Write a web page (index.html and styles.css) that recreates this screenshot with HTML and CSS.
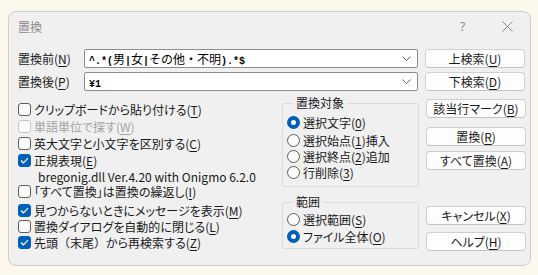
FILE: index.html
```html
<!DOCTYPE html>
<html lang="ja">
<head>
  <meta charset="UTF-8" />
  <title>置換</title>
  <link rel="stylesheet" href="styles.css">
</head>
<body>
  <div class="dialog">
    <div class="titlebar">
      <span class="title">置換</span>
      <span class="help">?</span>
      <span class="close">
        <svg width="11" height="11" viewBox="0 0 11 11"><path d="M0.5 0.5 L10.5 10.5 M10.5 0.5 L0.5 10.5" stroke="#8a8a8a" stroke-width="1" fill="none"/></svg>
      </span>
    </div>

    <div class="content">
      <div class="field-row">
        <label class="field-label">置換前(<u>N</u>)</label>
        <div class="combo">
          <span class="combo-text"><span class="han">^.*(</span>男<span class="han">|</span>女<span class="han">|</span>その他・不明<span class="han">).*$</span></span>
          <svg class="chevron" width="9" height="5" viewBox="0 0 9 5"><path d="M0.5 0.5 L4.5 4.5 L8.5 0.5" stroke="#606060" fill="none"/></svg>
        </div>
        <button class="btn">上検索(<u>U</u>)</button>
      </div>
      <div class="field-row">
        <label class="field-label">置換後(<u>P</u>)</label>
        <div class="combo">
          <span class="combo-text"><span class="han">¥1</span></span>
          <svg class="chevron" width="9" height="5" viewBox="0 0 9 5"><path d="M0.5 0.5 L4.5 4.5 L8.5 0.5" stroke="#606060" fill="none"/></svg>
        </div>
        <button class="btn">下検索(<u>D</u>)</button>
      </div>

      <div class="main">
        <div class="options">
          <div class="check r17"><span class="box"></span>クリップボードから貼り付ける(<u>T</u>)</div>
          <div class="check r17 disabled"><span class="box"></span>単語単位で探す(<u>W</u>)</div>
          <div class="check r17"><span class="box"></span>英大文字と小文字を区別する(<u>C</u>)</div>
          <div class="check r16"><span class="box on"><svg width="9" height="7" viewBox="0 0 9 7"><path d="M1 3.5 L3.4 5.8 L8 1.2" stroke="#fff" stroke-width="1.2" fill="none"/></svg></span>正規表現(<u>E</u>)</div>
          <div class="version r16">bregonig.dll Ver.4.20 with Onigmo 6.2.0</div>
          <div class="check r15"><span class="box"></span>「すべて置換」は置換の繰返し(<u>I</u>)</div>
          <div class="check r16 gap"><span class="box on"><svg width="9" height="7" viewBox="0 0 9 7"><path d="M1 3.5 L3.4 5.8 L8 1.2" stroke="#fff" stroke-width="1.2" fill="none"/></svg></span>見つからないときにメッセージを表示(<u>M</u>)</div>
          <div class="check r16"><span class="box"></span>置換ダイアログを自動的に閉じる(<u>L</u>)</div>
          <div class="check r16"><span class="box on"><svg width="9" height="7" viewBox="0 0 9 7"><path d="M1 3.5 L3.4 5.8 L8 1.2" stroke="#fff" stroke-width="1.2" fill="none"/></svg></span>先頭<span class="wide">（</span>末尾<span class="wide">）</span>から再検索する(<u>Z</u>)</div>
        </div>

        <div class="groups">
          <fieldset class="group target">
            <legend>置換対象</legend>
            <div class="radio first"><span class="dot on"></span>選択文字(<u>0</u>)</div>
            <div class="radio"><span class="dot"></span>選択始点(<u>1</u>)挿入</div>
            <div class="radio"><span class="dot"></span>選択終点(<u>2</u>)追加</div>
            <div class="radio"><span class="dot"></span>行削除(<u>3</u>)</div>
          </fieldset>
          <fieldset class="group scope">
            <legend>範囲</legend>
            <div class="radio first"><span class="dot"></span>選択範囲(<u>S</u>)</div>
            <div class="radio"><span class="dot on"></span>ファイル全体(<u>O</u>)</div>
          </fieldset>
        </div>

        <div class="actions">
          <button class="btn">該当行マーク(<u>B</u>)</button>
          <button class="btn mt9">置換(<u>R</u>)</button>
          <button class="btn mt5">すべて置換(<u>A</u>)</button>
          <button class="btn mt36">キャンセル(<u>X</u>)</button>
          <button class="btn mt7">ヘルプ(<u>H</u>)</button>
        </div>
      </div>
    </div>
  </div>
</body>
</html>
```

FILE: styles.css
```css
* {
  box-sizing: border-box;
}

body {
  margin: 0;
  padding: 11px 0 0 8px;
  background: #fcf8ec;
  font-family: "Noto Sans CJK JP", sans-serif;
  font-size: 12px;
  color: #1a1a1a;
  font-feature-settings: "palt" 1;
}

u {
  text-underline-offset: 2px;
}

.wide {
  font-feature-settings: normal;
}

.dialog {
  width: 523px;
  height: 255px;
  border: 1px solid #cdcdcd;
  border-radius: 8px;
  background: #f0f0f0;
}

/* judul */
.titlebar {
  display: flex;
  align-items: center;
  height: 28px;
}

.title {
  flex: 1;
  padding-left: 9px;
  color: #8c8c8c;
}

.help,
.close {
  width: 45px;
  display: flex;
  justify-content: center;
  align-items: center;
  color: #8c8c8c;
  font-family: "Noto Sans", sans-serif;
}

.content {
  padding: 9px 0 0 9px;
}

.field-row {
  display: flex;
  align-items: center;
  height: 19px;
  margin-bottom: 4px;
}

.field-label {
  width: 66px;
}

.combo {
  width: 334px;
  height: 19px;
  display: flex;
  align-items: center;
  padding: 0 6px 0 4px;
  background: #fff;
  border: 1px solid #8d8d8d;
  border-radius: 2px;
}

.combo-text {
  flex: 1;
  font-feature-settings: normal;
  font-size: 12px;
  color: #000;
}

/* huruf setengah lebar: 6px per karakter */
.han {
  font-family: "Liberation Mono", monospace;
  font-size: 10px;
  font-weight: bold;
}

.btn {
  width: 100px;
  height: 19px;
  padding: 0;
  border: 1px solid #d0d0d0;
  border-bottom-color: #c4c4c4;
  border-radius: 4px;
  background: #fdfdfd;
  font: inherit;
  color: #1a1a1a;
  line-height: 16px;
}

.field-row .btn {
  margin-left: 7px;
}

.main {
  display: flex;
  margin-top: 2px;
}

/* kotak centang */
.options {
  width: 264px;
  padding-top: 6px;
}

.check,
.version {
  display: flex;
  align-items: center;
}

.r17 { height: 17px; }
.r16 { height: 16px; }
.r15 { height: 15px; }
.gap { margin-top: 3px; }

.box {
  width: 13px;
  height: 13px;
  margin-right: 3px;
  border: 1px solid #5d5d5d;
  border-radius: 3px;
  background: #fbfbfb;
  display: flex;
  align-items: center;
  justify-content: center;
}

.box.on {
  background: #005fb8;
  border-color: #005fb8;
}

.disabled {
  color: #a3a3a3;
}

.disabled .box {
  border-color: #c6c6c6;
}

.version {
  padding-left: 20px;
}

/* grup radio */
.groups {
  width: 137px;
}

.group {
  margin: 0;
  padding: 0 0 6px 4px;
  border: 1px solid #dcdcdc;
  border-radius: 2px;
}

.group legend {
  margin-left: 6px;
  padding: 0 3px;
  line-height: 16px;
}

.scope {
  margin-top: 7px;
  padding-bottom: 4px;
}

.radio {
  display: flex;
  align-items: center;
  height: 16px;
}

.radio.first {
  margin-top: 3px;
}

.target .radio.first {
  margin-bottom: 2px;
}

.scope .radio.first {
  margin-top: 1px;
  margin-bottom: 1px;
}

.dot {
  width: 13px;
  height: 13px;
  margin-right: 3px;
  border: 1px solid #5d5d5d;
  border-radius: 50%;
  background: #fbfbfb;
}

.dot.on {
  border: 4px solid #005fb8;
  background: #fff;
}

/* tombol kanan */
.actions {
  display: flex;
  flex-direction: column;
  margin-left: 7px;
  padding-top: 4px;
}

.mt9 { margin-top: 9px; }
.mt5 { margin-top: 5px; }
.mt36 { margin-top: 36px; }
.mt7 { margin-top: 7px; }
```
